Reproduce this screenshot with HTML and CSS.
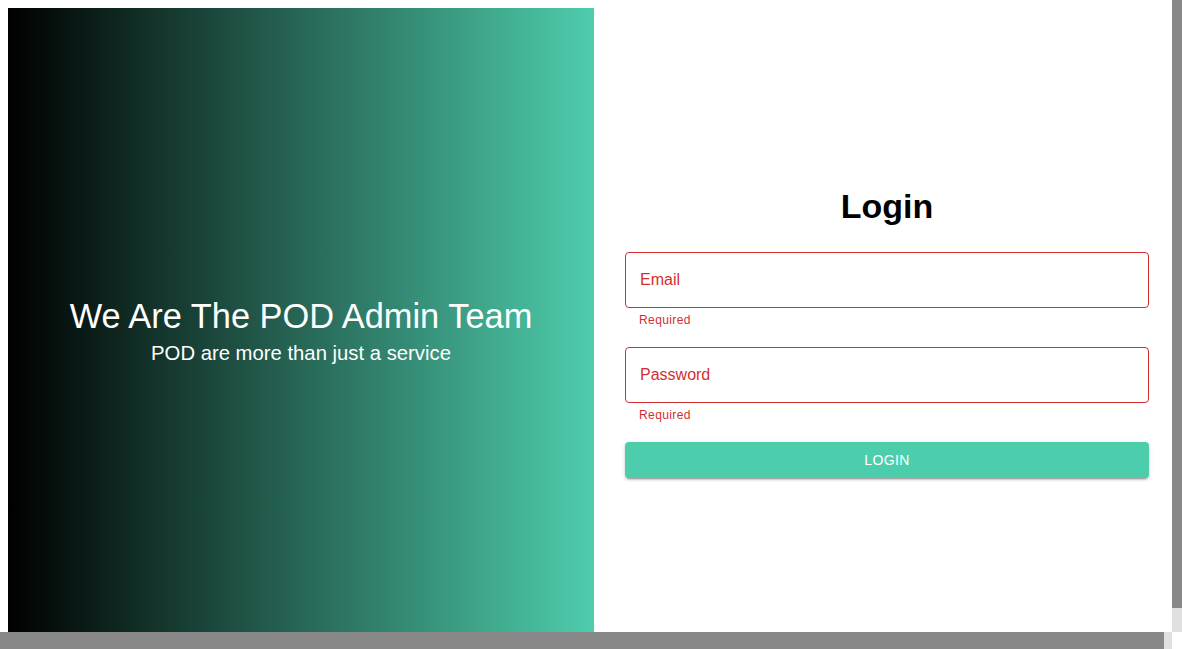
FILE: index.html
```html
<!DOCTYPE html>
<html lang="en">
<head>
<meta charset="utf-8">
<title>POD Admin - Login</title>
<link rel="stylesheet" href="styles.css">
</head>
<body>
  <main class="page">
    <section class="hero">
      <h1 class="hero-title">We Are The POD Admin Team</h1>
      <p class="hero-sub">POD are more than just a service</p>
    </section>
    <section class="auth">
      <h2 class="auth-title">Login</h2>
      <form class="auth-form">
        <div class="form-group">
          <div class="field"><span class="field-label">Email</span></div>
          <p class="helper">Required</p>
        </div>
        <div class="form-group">
          <div class="field"><span class="field-label">Password</span></div>
          <p class="helper">Required</p>
        </div>
        <button type="button" class="btn">Login</button>
      </form>
    </section>
  </main>
  <div class="scrollbar scrollbar-v" aria-hidden="true"><div class="thumb thumb-v"></div></div>
  <div class="scrollbar scrollbar-h" aria-hidden="true"><div class="thumb thumb-h"></div></div>
</body>
</html>
```
FILE: styles.css
```css
html {
  background: #fff;
}
body {
  margin: 8px;
  width: calc(100% - 10px);
  font-family: "Liberation Sans", Arial, sans-serif;
}
.page {
  display: flex;
  height: 100vh;
}
.hero {
  box-sizing: border-box;
  flex: 0 0 50%;
  display: flex;
  flex-direction: column;
  align-items: center;
  justify-content: center;
  padding-bottom: 4px;
  background: linear-gradient(to right, #000000, #4ecdac);
  color: #ffffff;
}
.hero-title {
  margin: 0 0 6px;
  font-size: 34.4px;
  font-weight: 400;
  line-height: normal;
}
.hero-sub {
  margin: 0;
  font-size: 20.3px;
  line-height: normal;
}
.auth {
  box-sizing: border-box;
  flex: 0 0 50%;
  display: flex;
  flex-direction: column;
  justify-content: center;
  padding: 0 31px;
  background: #ffffff;
}
.auth-title {
  margin: 0 0 26px;
  text-align: center;
  font-size: 34px;
  font-weight: 700;
  line-height: normal;
  color: #000;
}
.auth-form {
  display: flex;
  flex-direction: column;
}
.form-group {
  margin-bottom: 16px;
}
.field {
  box-sizing: border-box;
  height: 56px;
  display: flex;
  align-items: center;
  padding: 0 14px;
  border: 1px solid #d32f2f;
  border-radius: 4px;
}
.field-label {
  font-size: 16px;
  color: #d32f2f;
}
.helper {
  margin: 3px 14px 0;
  font-size: 12px;
  line-height: 1.66;
  letter-spacing: 0.4px;
  color: #d32f2f;
}
.btn {
  height: 36.5px;
  border: 0;
  border-radius: 4px;
  background: #4ccead;
  color: #ffffff;
  font-family: "Liberation Sans", Arial, sans-serif;
  font-size: 14px;
  font-weight: 500;
  letter-spacing: 0.4px;
  text-transform: uppercase;
  box-shadow: 0 3px 1px -2px rgba(0,0,0,0.2), 0 2px 2px 0 rgba(0,0,0,0.14), 0 1px 5px 0 rgba(0,0,0,0.12);
  cursor: pointer;
}
.scrollbar {
  position: fixed;
  background: #e0e0e0;
  z-index: 10;
}
.scrollbar-v {
  top: 0;
  right: 0;
  width: 10px;
  height: calc(100% - 17px);
}
.scrollbar-h {
  left: 0;
  bottom: 0;
  width: calc(100% - 10px);
  height: 17px;
}
.thumb {
  background: #888888;
}
.thumb-v {
  width: 100%;
  height: 608px;
}
.thumb-h {
  width: 1164px;
  height: 100%;
}
```
